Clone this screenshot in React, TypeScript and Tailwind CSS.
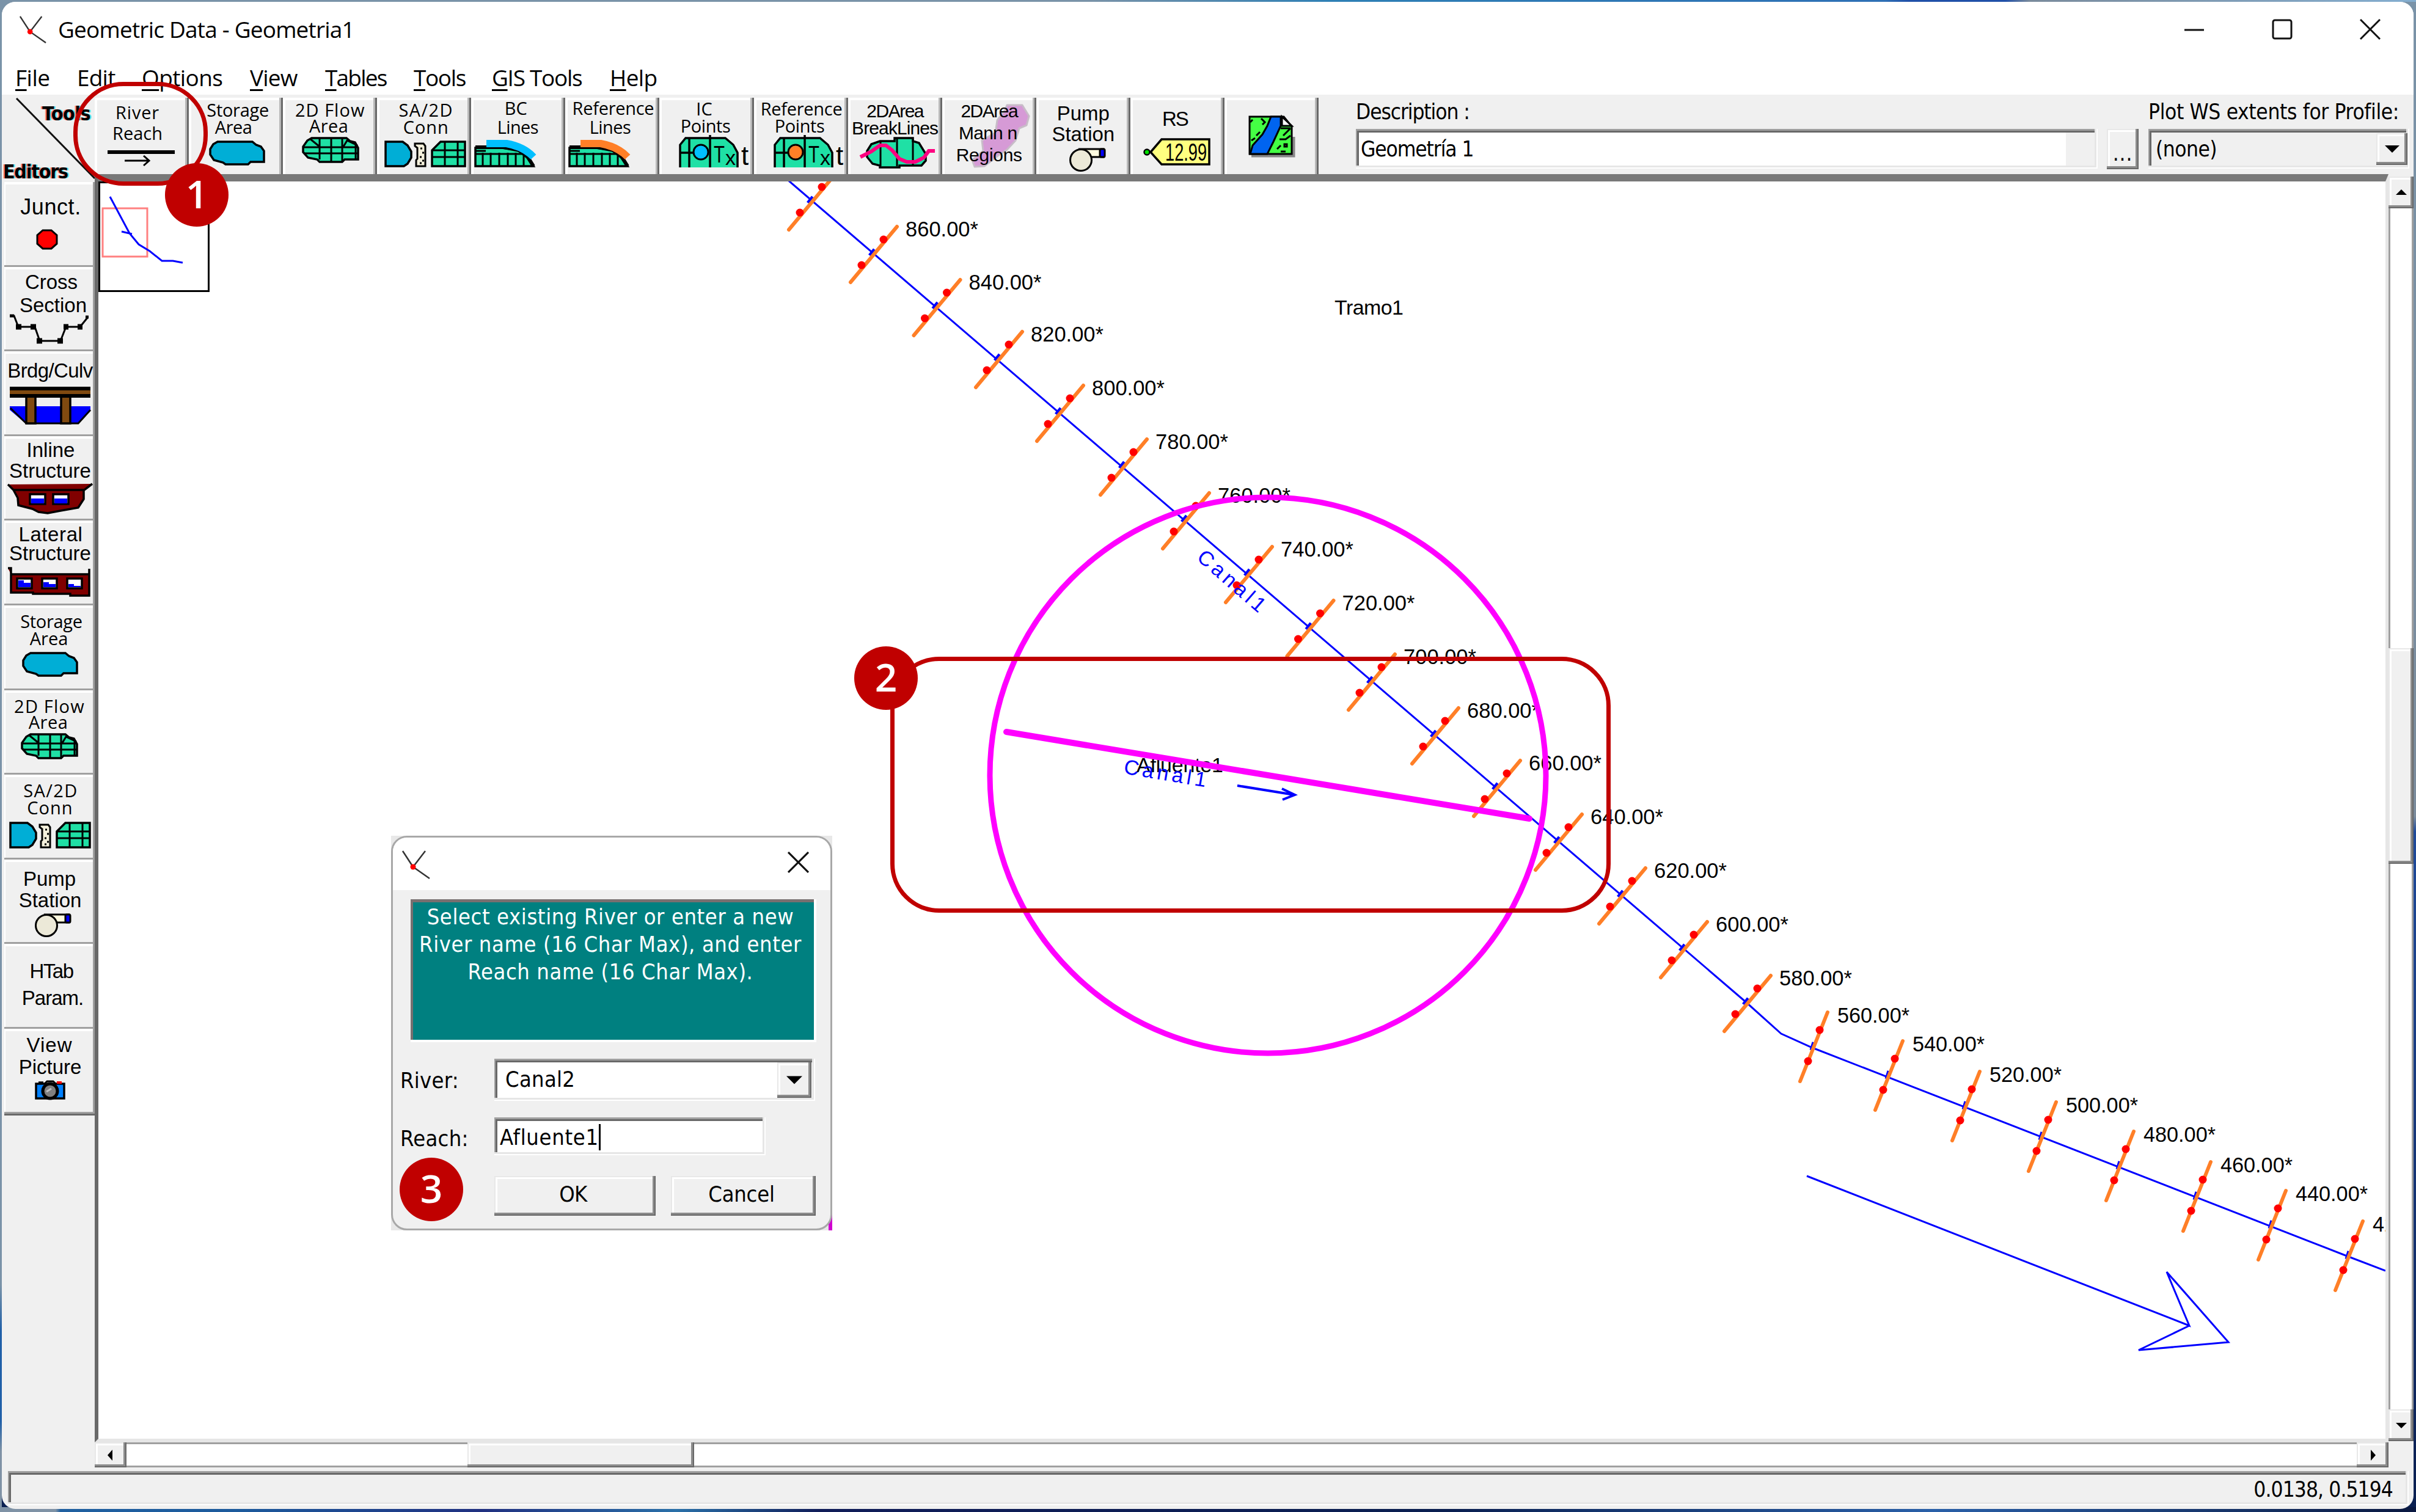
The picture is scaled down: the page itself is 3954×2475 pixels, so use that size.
import React from "react";

const SEGOE = "font-['Open_Sans','Noto_Sans',sans-serif]";
const TAHOMA = "font-['DejaVu_Sans_Condensed','DejaVu_Sans',sans-serif]";
const SANS = "font-['Liberation_Sans',Arial,sans-serif]";

const RAISED =
  "bg-[#f0f0f0] [box-shadow:inset_-2px_-2px_0_#696969,inset_-5px_-5px_0_#8c8c8c,inset_2px_2px_0_#e8e8e8,inset_5px_5px_0_#fff]";
const SUNKEN =
  "[box-shadow:inset_-2px_-2px_0_#fff,inset_-5px_-5px_0_#e6e6e6,inset_2px_3px_0_#a0a0a0,inset_5px_6px_0_#696969]";

/* ---------- pictograms ---------- */

const Art = ({ box, children }: { box: string; children: React.ReactNode }) => (
  <svg viewBox={box} className="absolute inset-0 h-full w-full" fill="none" stroke="#000" strokeWidth={3.5}>
    {children}
  </svg>
);

const Blob = () => <path d="M47 72H104L110 77L118 80L123 87V105H101L97 109H60L56 106L41 102L35 93V84L40 76Z" fill="#00aed6" />;

const MeshBlob = () => (
  <g>
    <path d="M47 66H104L110 71L118 73L123 82V101H101L97 105H60L56 101L41 98L33 89V80L40 70Z" fill="#1fe0a5" />
    <path d="M60 66V101M79 66V105M97 66V105M119 74V100M33 81H123M35 91H123M44 67L60 80M122 78L105 70L99 80" strokeWidth={3} />
  </g>
);

const Conn = ({ dy = 0 }: { dy?: number }) => (
  <g transform={`translate(0 ${dy})`}>
    <path d="M14 72H42L50 78L56 88V98L50 108L44 112H14Z" fill="#00aed6" />
    <path d="M62 75H76L79 79V112H64V102L66 100V82L62 79Z" fill="#f4f0dc" strokeWidth={3} />
    <path d="M71 83h3M74 90h3M70 97h3M74 103h3M70 107h3" strokeWidth={3} />
    <path d="M90 112V86L104 72H144V112Z" fill="#1fe0a5" />
    <path d="M111 72V112M132 72V112M90 86H144M90 97H144" strokeWidth={3} />
  </g>
);

const Curve = ({ color }: { color: string }) => (
  <g>
    <path d="M7 112V82H52L78 87L92 98L102 112Z" fill="#1fe0a5" />
    <path d="M7 81H52L76 84L92 96L102 112" strokeWidth={6} />
    <path d="M7 92H90M7 87H24M19 90V112M32 90V112M46 90V112M60 90V112M73 90V112M86 94V112" strokeWidth={3} />
    <path d="M25 75H58Q86 80 102 97" stroke={color} strokeWidth={12} />
  </g>
);

const PointArt = ({ color }: { color: string }) => (
  <g>
    <path d="M34 114V75L42 66H110L122 78L128 88V114Z" fill="#1fe0a5" stroke="none" />
    <path d="M34 114V77L43 66H108L121 77L128 90V114M49 66V114M83 61V114M34 90H60" />
    <circle cx={68} cy={89} r={12} fill={color} strokeWidth={3} />
    <g fill="#000" stroke="none" className={SANS} fontSize={38}>
      <text x={89} y={106} textLength={18} lengthAdjust="spacingAndGlyphs">T</text>
      <text x={108} y={110} fontSize={34}>x</text>
      <text x={134} y={110} fontSize={44}>t</text>
    </g>
  </g>
);

const Pump = ({ dx = 0, dy = 0 }: { dx?: number; dy?: number }) => (
  <g transform={`translate(${dx} ${dy})`} strokeWidth={3}>
    <path d="M72 84H110V97H84Z" fill="#fffbe0" />
    <rect x={104} y={84} width={8} height={13} rx={2} fill="#00f" />
    <circle cx={73} cy={102} r={17.5} fill="#ece9d8" />
  </g>
);

type Item = { lines: [string, string][]; pad: string; art: React.ReactNode };

const uiText = `${SEGOE} text-[29px]`;

const tools: Item[] = [
  {
    pad: "pt-[7px] pr-[14px]",
    lines: [["River", `${uiText} leading-[34px] tracking-[0.8px]`], ["Reach", `${uiText} leading-[34px]`]],
    art: (
      <g>
        <path d="M21 89H131" strokeWidth={6} />
        <path d="M49 103H88M80 95L89 103L80 111" strokeWidth={3} />
      </g>
    ),
  },
  {
    pad: "pt-[6px]",
    lines: [["Storage", `${uiText} leading-[28px] tracking-[-0.3px] pl-[6px]`], ["Area", `${uiText} leading-[28px] pr-[8px] tracking-[-0.5px]`]],
    art: <Blob />,
  },
  {
    pad: "pt-[7px]",
    lines: [["2D Flow", `${uiText} leading-[26px] tracking-[1px]`], ["Area", `${uiText} leading-[26px] pr-[4px] tracking-[0.5px]`]],
    art: <MeshBlob />,
  },
  {
    pad: "pt-[6px]",
    lines: [["SA/2D", `${uiText} leading-[28px] tracking-[1.4px] pl-[6px]`], ["Conn", `${uiText} leading-[28px] tracking-[1px] pl-[6px]`]],
    art: <Conn />,
  },
  {
    pad: "pt-[1px]",
    lines: [["BC", `${uiText} leading-[31px] pr-[8px]`], ["Lines", `${uiText} leading-[31px] tracking-[-0.6px] pr-[2px]`]],
    art: <Curve color="#00bfff" />,
  },
  {
    pad: "pt-[1px]",
    lines: [["Reference", `${uiText} leading-[31px] tracking-[-0.3px] pl-[2px]`], ["Lines", `${uiText} leading-[31px] tracking-[-0.6px] pr-[8px]`]],
    art: <Curve color="#ff7f27" />,
  },
  {
    pad: "pt-[4px]",
    lines: [["IC", `${uiText} leading-[28px] pr-[8px]`], ["Points", `${uiText} leading-[28px] tracking-[-0.4px] pr-[4px]`]],
    art: <PointArt color="#00bfff" />,
  },
  {
    pad: "pt-[4px]",
    lines: [["Reference", `${uiText} leading-[28px] tracking-[-0.3px] pl-[2px]`], ["Points", `${uiText} leading-[28px] tracking-[-0.4px] pr-[4px]`]],
    art: <PointArt color="#ff7f27" />,
  },
  {
    pad: "pt-[8px]",
    lines: [["2DArea", `${SANS} text-[30px] leading-[28px] tracking-[-1.5px]`], ["BreakLines", `${SANS} text-[30px] leading-[28px] tracking-[-0.9px]`]],
    art: (
      <g>
        <path d="M52 71H76V66H106V71L116 74L127 92V103L120 111H84V114H52V111L40 108L31 97V87L38 76Z" fill="#1fe0a5" />
        <path d="M53 71V112M80 66V112M106 68V111" strokeWidth={3} />
        <path d="M20 97L38 88L52 78H62L72 86L84 100L96 105H110L124 98L132 87H142" stroke="#ff0080" strokeWidth={6} />
      </g>
    ),
  },
  {
    pad: "pt-[4px]",
    lines: [
      ["2DArea", `${SANS} text-[30px] leading-[36px] tracking-[-1.5px]`],
      ["Mann n", `${SANS} text-[30px] leading-[36px] tracking-[-0.8px] pr-[4px]`],
      ["Regions", `${SANS} text-[30px] leading-[36px] tracking-[-0.3px]`],
    ],
    art: (
      <path
        d="M106 12L131 12L142 30L138 45L126 50L120 70L106 85L91 95L69 112L53 113L49 102L67 87L65 70L87 57L90 37L103 20Z"
        fill="#d69ad6"
        stroke="#c8bcc8"
        strokeWidth={3}
        strokeLinejoin="round"
      />
    ),
  },
  {
    pad: "pt-[9px]",
    lines: [["Pump", `${SANS} text-[33px] leading-[34px]`], ["Station", `${SANS} text-[33px] leading-[34px]`]],
    art: <Pump />,
  },
  {
    pad: "pt-[18px] pr-[8px]",
    lines: [["RS", `${SANS} text-[33px] leading-[34px] tracking-[-2px]`]],
    art: (
      <g>
        <path d="M33 89L51 68H129V109H51Z" fill="#ffff80" />
        <circle cx={27} cy={89} r={4.5} fill="#00e000" strokeWidth={2.5} />
        <text x={57} y={103} fill="#000" stroke="none" className={SANS} fontSize={40} textLength={68} lengthAdjust="spacingAndGlyphs">
          12.99
        </text>
      </g>
    ),
  },
  {
    pad: "",
    lines: [],
    art: (
      <g strokeWidth={3}>
        <path d="M44 95H113V64" stroke="#888" strokeWidth={5} />
        <path d="M41 31H97L110 47V92H41Z" fill="#44ff44" />
        <path d="M76 31L70 46L62 60L46 78L42 92H70L80 72L92 46V31Z" fill="#0064f0" />
        <path d="M94 31V46H110Z" fill="#fff" />
        <path d="M92 50H108M96 62L108 50M90 68L100 68L108 62M42 40L46 36M60 34L66 40L62 44M52 62L58 56M44 70L50 66M86 84L92 78M92 88H100M98 76H102V80H98Z" />
      </g>
    ),
  },
];

const side = `${SANS} text-[33px]`;
const sideUi = `${SEGOE} text-[29px]`;

const editors: Item[] = [
  {
    pad: "pt-[24px]",
    lines: [["Junct.", `${SANS} text-[36px] leading-[34px] tracking-[0.6px] pl-[4px]`]],
    art: <path d="M63 79H77L86 87V101L77 109H63L54 101V87Z" fill="#f00" strokeWidth={3} />,
  },
  {
    pad: "pt-[6px]",
    lines: [["Cross", `${side} leading-[38px] pl-[6px]`], ["Section", `${side} leading-[38px] pl-[12px]`]],
    art: (
      <g>
        <path d="M9 80H16L23 98H50L58 121H92L101 98H124L137 82" strokeWidth={3} />
        <path d="M19 98h9M43 98h9M53 121h9M87 121h9M97 98h8M120 98h8" strokeWidth={9} />
        <path d="M9 80h7M133 82h5" strokeWidth={5} />
      </g>
    ),
  },
  {
    pad: "pt-[15px]",
    lines: [["Brdg/Culv", `${side} leading-[34px] tracking-[-0.6px] pl-[2px]`]],
    art: (
      <g>
        <path d="M9 90H141V96L121 119H36L9 96Z" fill="#00f" stroke="none" />
        <path d="M10 93L36 118H121L141 96" strokeWidth={3} />
        <rect x={9} y={74} width={132} height={16} fill="#f0f0f0" stroke="none" />
        <rect x={36} y={72} width={15} height={46} fill="#804a10" />
        <rect x={93} y={72} width={15} height={46} fill="#804a10" />
        <rect x={9} y={58} width={132} height={18} fill="#000" stroke="none" />
        <rect x={9} y={64} width={132} height={6} fill="#804a10" stroke="none" />
      </g>
    ),
  },
  {
    pad: "pt-[6px]",
    lines: [["Inline", `${side} leading-[34px] pl-[4px]`], ["Structure", `${side} leading-[34px] pl-[2px]`]],
    art: (
      <g>
        <path d="M6 79L15 88H131L144 78M15 88L22 101L23 113L46 119L56 124L71 126L92 122L121 117L130 103V88" fill="#800000" />
        <rect x={42} y={95} width={25} height={16} fill="#fff" />
        <rect x={80} y={95} width={25} height={16} fill="#fff" />
        <path d="M44 106H65M82 106H103" stroke="#00f" strokeWidth={8} />
      </g>
    ),
  },
  {
    pad: "pt-[7px]",
    lines: [["Lateral", `${side} leading-[31px] tracking-[0.6px] pl-[4px]`], ["Structure", `${side} leading-[31px] pl-[2px]`]],
    art: (
      <g>
        <path d="M6 78H11V88H139V79V123H108V120H47V118H11V88" fill="#800000" />
        <rect x={21} y={95} width={24} height={16} fill="#fff" />
        <rect x={62} y={95} width={24} height={16} fill="#fff" />
        <rect x={103} y={95} width={24} height={16} fill="#fff" />
        <path d="M23 98H32V102H43V109H23ZM64 101H73V104H84V109H64ZM105 104H114V107H125V109H105Z" fill="#00f" stroke="none" />
      </g>
    ),
  },
  {
    pad: "pt-[12px]",
    lines: [["Storage", `${sideUi} leading-[28px] tracking-[-0.3px] pl-[6px]`], ["Area", `${sideUi} leading-[28px] pr-[2px]`]],
    art: (
      <g transform="translate(-4 6)">
        <Blob />
      </g>
    ),
  },
  {
    pad: "pt-[13px]",
    lines: [["2D Flow", `${sideUi} leading-[26px] tracking-[1.2px]`], ["Area", `${sideUi} leading-[26px] tracking-[0.5px] pr-[4px]`]],
    art: (
      <g transform="translate(-4 6)">
        <MeshBlob />
      </g>
    ),
  },
  {
    pad: "pt-[12px]",
    lines: [["SA/2D", `${sideUi} leading-[28px] tracking-[1.4px] pl-[4px]`], ["Conn", `${sideUi} leading-[28px] tracking-[1px] pl-[2px]`]],
    art: (
      <g transform="translate(-4 0)">
        <Conn dy={7} />
      </g>
    ),
  },
  {
    pad: "pt-[14px]",
    lines: [["Pump", `${side} leading-[35px]`], ["Station", `${side} leading-[35px] pl-[2px]`]],
    art: <Pump dx={-4} dy={6} />,
  },
  {
    pad: "pt-[23px]",
    lines: [["HTab", `${side} leading-[44px] tracking-[-1.5px] pl-[6px]`], ["Param.", `${side} leading-[44px] tracking-[-1px] pl-[10px]`]],
    art: null,
  },
  {
    pad: "pt-[9px]",
    lines: [["View", `${side} leading-[36px] tracking-[1px]`], ["Picture", `${side} leading-[36px] pl-[2px]`]],
    art: (
      <g>
        <path d="M52 90H98V114H52ZM56 88H64" fill="#0080ff" />
        <path d="M86 88H94" stroke="#f00" strokeWidth={4} />
        <path d="M66 90L70 86H80L84 90" fill="#ddd" strokeWidth={3} />
        <circle cx={75} cy={102} r={12} fill="#808080" strokeWidth={5} />
        <path d="M69 103L77 98" stroke="#c0c0c0" strokeWidth={3} />
      </g>
    ),
  },
];

const Face = ({ item, box, className }: { item: Item; box: string; className: string }) => (
  <button className={`relative flex flex-col text-center text-black ${className}`}>
    <Art box={box}>{item.art}</Art>
    <span className={`relative block w-full ${item.pad}`}>
      {item.lines.map(([t, c]) => (
        <span key={t} className={`block whitespace-nowrap ${c}`}>
          {t}
        </span>
      ))}
    </span>
  </button>
);

/* ---------- schematic ---------- */

const steep: [string, number, number][] = [
  ["", 1367, 285],
  ["860.00*", 1468, 371],
  ["840.00*", 1571.5, 458],
  ["820.00*", 1673, 543],
  ["800.00*", 1773, 631],
  ["780.00*", 1877, 719],
  ["760.00*", 1979, 807],
  ["740.00*", 2082, 895],
  ["720.00*", 2182.5, 983],
  ["700.00*", 2283, 1071],
  ["680.00*", 2387, 1159],
  ["660.00*", 2488, 1245],
  ["640.00*", 2589, 1333],
  ["620.00*", 2693, 1421],
  ["600.00*", 2794, 1509],
  ["580.00*", 2898, 1597],
];

const gentle: [string, number, number][] = [
  ["560.00*", 2991, 1657],
  ["540.00*", 3114, 1704],
  ["520.00*", 3240, 1754],
  ["500.00*", 3365, 1804],
  ["480.00*", 3492, 1852],
  ["460.00*", 3618, 1902],
  ["440.00*", 3741, 1949],
  ["420.00*", 3867, 1999],
];

const Schematic = () => (
  <svg viewBox="161 297 3743 2058" className="block h-[2058px] w-[3743px]" fill="none">
    <path d="M1291 296L2857 1640L2915 1692L2966 1715L3841 2056L3904 2080" stroke="#00f" strokeWidth={3} />
    {steep.map(([label, x, y]) => (
      <g key={y} transform={`translate(${x} ${y})`}>
        <path d="M-37 37L-45 47" stroke="#00f" strokeWidth={5} />
        <path d="M0 0L-76 91" stroke="#ff7f27" strokeWidth={6} strokeLinecap="round" />
        <circle cx={-22} cy={21} r={6.5} fill="#f00" />
        <circle cx={-58} cy={63} r={6.5} fill="#f00" />
        {label && (
          <text x={14} y={16} className={SANS} fontSize={34.5} fill="#000" textLength={119} lengthAdjust="spacingAndGlyphs">
            {label}
          </text>
        )}
      </g>
    ))}
    {gentle.map(([label, x, y]) => (
      <g key={y} transform={`translate(${x} ${y})`}>
        <path d="M-23 49L-27 62" stroke="#00f" strokeWidth={5} />
        <path d="M0 0L-45 113" stroke="#ff7f27" strokeWidth={6} strokeLinecap="round" />
        <circle cx={-13} cy={29} r={6.5} fill="#f00" />
        <circle cx={-32} cy={80} r={6.5} fill="#f00" />
        <text x={16} y={17} className={SANS} fontSize={34.5} fill="#000" textLength={118} lengthAdjust="spacingAndGlyphs">
          {label}
        </text>
      </g>
    ))}
    <text x={2184} y={515} className={SANS} fontSize={34} fill="#000" textLength={113}>
      Tramo1
    </text>
    <text transform="translate(1957 915) rotate(41)" className={SANS} fontSize={34} fill="#00f" textLength={136}>
      Canal1
    </text>
    <text x={1860} y={1264} className={SANS} fontSize={34} fill="#000" textLength={142}>
      Afluente1
    </text>
    <text transform="translate(1838 1266) rotate(9.5)" className={SANS} fontSize={34} fill="#00f" textLength={136}>
      Canal1
    </text>
    <path d="M2025 1286L2118 1301M2098 1291L2119 1301L2099 1309" stroke="#00f" strokeWidth={4} />
    <path d="M2957 1925L3583 2170L3546 2082L3647 2197L3500 2210L3583 2170" stroke="#00f" strokeWidth={3} />
    <circle cx={2075} cy={1269} r={455} stroke="#f0f" strokeWidth={9} />
    <path d="M1647 1198L2503 1340" stroke="#f0f" strokeWidth={10} strokeLinecap="round" />
    <rect x={162.5} y={298.5} width={179} height={178} fill="#fff" stroke="#000" strokeWidth={3} />
    <rect x={168} y={341} width={73} height={79} stroke="#ff8080" strokeWidth={3} />
    <path d="M180 322L212 382L227 400L245 411L265 427H283L299 430M199 379L216 383" stroke="#00f" strokeWidth={3} />
  </svg>
);

/* ---------- small parts ---------- */

const Tri = ({ d, className }: { d: string; className: string }) => (
  <svg viewBox="0 0 20 20" className={className} fill="#000">
    <path d={d} />
  </svg>
);

const ScrollArrow = ({ d, className }: { d: string; className: string }) => (
  <div className={`flex shrink-0 items-center justify-center ${RAISED} ${className}`}>
    <Tri d={d} className="h-5 w-5" />
  </div>
);

const Badge = ({ n, className }: { n: string; className: string }) => (
  <div className={`absolute flex h-[104px] w-[104px] items-center justify-center rounded-full bg-[#c00000] pb-1 text-[64px] font-semibold leading-none text-white ${SEGOE} ${className}`}>
    {n}
  </div>
);

const RiverMark = ({ className }: { className: string }) => (
  <svg viewBox="0 0 48 48" className={className} fill="none" stroke="#333" strokeWidth={2.5}>
    <path d="M3 1L20 27L40 1M20 27L47 46" />
    <circle cx={20} cy={27} r={4.5} fill="#f00" stroke="none" />
  </svg>
);

const menus: [string, string, string][] = [
  ["F", "ile", "w-[101px] tracking-[-0.5px]"],
  ["", "Edit", "w-[106px] tracking-[-0.8px]"],
  ["O", "ptions", "w-[177px] tracking-[-0.6px]"],
  ["V", "iew", "w-[123px] tracking-[-0.8px]"],
  ["T", "ables", "w-[145px] tracking-[-1.8px]"],
  ["T", "ools", "w-[128px] tracking-[-1.4px]"],
  ["G", "IS Tools", "w-[193px] tracking-[-1.3px]"],
  ["H", "elp", "w-[100px] tracking-[-0.6px]"],
];

const Dialog = () => (
  <div className="absolute left-[640px] top-[1368px] h-[646px] w-[722px] bg-[#e8e8e8]">
    <div className="absolute right-0 top-[488px] h-[42px] w-[3px] bg-[#c800c8]" />
    <div className="absolute bottom-0 right-0 h-[36px] w-[6px] bg-[#d000d0]" />
    <div className={`relative flex h-full w-full flex-col overflow-hidden rounded-[26px] border-[3px] border-[#a8a8a8] bg-[#f0f0f0] text-[36px] tracking-[0.3px] text-black ${TAHOMA}`}>
      <div className="flex h-[86px] shrink-0 items-start justify-between bg-white pl-[12px] pr-[35px] pt-[21px]">
        <RiverMark className="h-[48px] w-[50px]" />
        <svg viewBox="0 0 34 34" className="mt-[2px] h-[35px] w-[35px]" stroke="#111" strokeWidth={3} fill="none">
          <path d="M1 1L33 33M33 1L1 33" />
        </svg>
      </div>
      <div className="ml-[29px] mt-[15px] h-[234px] w-[664px] shrink-0 bg-[#008080] pt-[6px] text-center leading-[45px] tracking-[0.6px] text-white [box-shadow:inset_-4px_-4px_0_#fff,inset_4px_5px_0_#787070]">
        <span className="block whitespace-nowrap pr-[10px]">Select existing River or enter a new</span>
        <span className="block whitespace-nowrap pr-[10px]">River name (16 Char Max), and enter</span>
        <span className="block whitespace-nowrap pr-[10px]">Reach name (16 Char Max).</span>
      </div>
      <div className="mt-[27px] flex h-[69px] shrink-0 items-center pl-[12px]">
        <span className="w-[154px] pt-[2px]">River:</span>
        <div className={`flex h-[69px] w-[525px] items-center justify-between bg-white py-[6px] pl-[18px] pr-[6px] ${SUNKEN}`}>
          <span className="pb-[2px]">Canal2</span>
          <div className={`flex h-[58px] w-[56px] items-center justify-center ${RAISED}`}>
            <Tri d="M0 5H20L10 15Z" className="h-[26px] w-[26px]" />
          </div>
        </div>
      </div>
      <div className="mt-[27px] flex h-[62px] shrink-0 items-center pl-[12px]">
        <span className="w-[154px] pt-[8px]">Reach:</span>
        <div className={`flex h-[62px] w-[444px] items-center bg-white pl-[9px] pt-[3px] ${SUNKEN}`}>
          <span className="tracking-[0.7px]">Afluente1</span>
          <div className="h-[43px] w-[3px] bg-black" />
        </div>
      </div>
      <div className="mt-[34px] flex h-[65px] shrink-0 gap-[25px] pl-[166px]">
        <button className={`w-[264px] pb-[6px] pr-[6px] text-center tracking-[-0.5px] ${RAISED}`}>OK</button>
        <button className={`w-[237px] pb-[6px] pr-[6px] text-center tracking-[-0.2px] ${RAISED}`}>Cancel</button>
      </div>
    </div>
    <Badge n="3" className="left-[14px] top-[527px]" />
  </div>
);

export default function App() {
  return (
    <div className="relative h-[2475px] w-[3954px] overflow-hidden bg-[linear-gradient(180deg,#7a93a8_0%,#7a8b9c_54%,#1f4a9a_55%,#0a1f50_100%)] pb-[5px] pl-[3px] pr-[4px] pt-[3px]">
      <div className="absolute left-0 top-0 h-[3px] w-full bg-[linear-gradient(90deg,#7a93a8_0%,#7a93a8_45%,#2f80b5_55%,#2f70b5_78%,#2050a8_79%,#2050a8_83%,#7a8b9c_84%,#84aed0_100%)]" />
      <div className="absolute bottom-0 left-0 h-[8px] w-full bg-[linear-gradient(90deg,#7f92a5_0%,#7f92a5_2.3%,#2060a0_2.5%,#1c5a9c_10%,#203080_20%,#2a70a8_28%,#101c58_34%,#0a1f50_60%,#2a60a8_80%,#0a1840_100%)]" />
      <div className="absolute left-0 top-0 h-full w-[3px] bg-[linear-gradient(180deg,#7a93a8_0%,#7a93a8_85%,#2060a8_88%,#2060a8_94%,#7f92a5_96%)]" />

      <div className="relative flex h-full w-full flex-col overflow-hidden rounded-[22px] bg-[#f0f0f0]">
        {/* title bar */}
        <div className="flex h-[90px] shrink-0 items-center bg-white pl-[26px]">
          <RiverMark className="mt-[2px] h-[46px] w-[48px]" />
          <h1 className={`ml-[18px] whitespace-nowrap text-[37px] tracking-[-0.8px] text-black ${SEGOE}`}>Geometric Data - Geometria1</h1>
          <div className="ml-auto flex items-center gap-[110px] pr-[54px]">
            <svg viewBox="0 0 34 34" className="h-[34px] w-[34px]" stroke="#111" strokeWidth={3} fill="none">
              <path d="M1 18H33" />
            </svg>
            <svg viewBox="0 0 34 34" className="h-[34px] w-[34px]" stroke="#111" strokeWidth={3} fill="none">
              <rect x={2} y={2} width={30} height={30} rx={3} />
            </svg>
            <svg viewBox="0 0 34 34" className="h-[34px] w-[34px]" stroke="#111" strokeWidth={3} fill="none">
              <path d="M1 1L33 33M33 1L1 33" />
            </svg>
          </div>
        </div>
        {/* menu bar */}
        <div className={`flex h-[62px] shrink-0 items-center bg-white pl-[22px] pt-[6px] text-[37px] text-black ${SEGOE}`}>
          {menus.map(([k, rest, c]) => (
            <span key={k + rest} className={`whitespace-nowrap ${c}`}>
              <span className="underline decoration-[3px] underline-offset-[5px]">{k}</span>
              {rest}
            </span>
          ))}
        </div>

        <div className="flex h-[2247px] shrink-0">
          {/* editors column */}
          <div className="flex w-[152px] shrink-0 flex-col">
            <div className={`relative flex h-[143px] shrink-0 flex-col text-[32px] font-bold leading-none text-black [text-shadow:-2px_0_0_#ff8080,2px_0_0_#60e8e8] ${TAHOMA}`}>
              <svg viewBox="0 0 152 143" className="absolute inset-0 h-full w-full" stroke="#111" strokeWidth={3}>
                <path d="M24 6L152 137" />
              </svg>
              <span className="relative ml-[66px] mt-[15px] whitespace-nowrap tracking-[-0.6px]">Tools</span>
              <span className="relative ml-[2px] mt-auto whitespace-nowrap pb-[1px] tracking-[-1.3px]">Editors</span>
            </div>
            <div className="flex w-[152px] flex-col pl-[4px]">
              {editors.map((e, i) => (
                <Face
                  key={i}
                  item={e}
                  box="0 0 148 138.6"
                  className="h-[138.6px] w-[148px] shrink-0 bg-[#f0f0f0] [box-shadow:inset_0_-3px_0_#a0a0a0,inset_2px_0_0_#fff,inset_-3px_0_0_#a0a0a0,inset_0_4px_0_#fff]"
                />
              ))}
              <div className="h-[3px] bg-[#696969]" />
            </div>
          </div>

          <div className="flex w-[3795px] shrink-0 flex-col">
            {/* toolbar */}
            <div className="flex h-[130px] shrink-0">
              <div className="mt-[5px] flex w-[2003px] shrink-0">
                {tools.map((t, i) => (
                  <Face
                    key={i}
                    item={t}
                    box="0 0 154 125"
                    className="h-[125px] w-[154.08px] shrink-0 bg-[#f0f0f0] [box-shadow:inset_-3px_0_0_#696969,inset_-6px_0_0_#b8b8b8,inset_4px_4px_0_#fff]"
                  />
                ))}
              </div>
              <div className={`ml-[61px] flex text-[35px] leading-[40px] text-black ${TAHOMA}`}>
                <div className="w-[1214px] pt-[8px]">
                  <span className="block whitespace-nowrap tracking-[-1.1px]">Description :</span>
                  <div className={`mt-[8px] flex h-[65px] items-center bg-[linear-gradient(90deg,#fff_1162px,#f0f0f0_1162px)] pl-[8px] tracking-[-1.1px] ${SUNKEN}`}>Geometría 1</div>
                </div>
                <button className={`ml-[15px] mt-[56px] flex h-[66px] w-[52px] items-end justify-center pb-[6px] tracking-[0.8px] ${RAISED}`}>...</button>
                <div className="ml-[16px] w-[427px] pt-[8px]">
                  <span className="block whitespace-nowrap tracking-[-0.35px]">Plot WS extents for Profile:</span>
                  <div className={`mt-[8px] flex h-[65px] items-center justify-between pl-[12px] pr-[3px] tracking-[-0.5px] ${SUNKEN}`}>
                    <span>(none)</span>
                    <div className={`flex h-[52px] w-[51px] items-center justify-center ${RAISED}`}>
                      <Tri d="M0 5H20L10 15Z" className="h-[24px] w-[24px]" />
                    </div>
                  </div>
                </div>
              </div>
            </div>

            <div className="flex h-[2117px]">
              <div className="flex w-[3754px] shrink-0 flex-col">
                <div className="h-[2076px] bg-white [border-bottom:6px_solid_#e6e6e6] [border-left:6px_solid_#696969] [border-right:5px_solid_#e6e6e6] [border-top:12px_solid_#787878]">
                  <Schematic />
                </div>
                <div className="flex h-[41px] border-y-[3px] border-[#a0a0a0] bg-white">
                  <ScrollArrow d="M13 1V19L5 10Z" className="-my-[3px] w-[52px]" />
                  <div className="w-[558px]" />
                  <div className={`-my-[3px] w-[371px] ${RAISED}`} />
                  <ScrollArrow d="M7 1V19L15 10Z" className="-my-[3px] ml-auto w-[52px]" />
                </div>
              </div>
              <div className="mt-[4px] flex w-[41px] flex-col border-x-[3px] border-[#a0a0a0] bg-white">
                <ScrollArrow d="M1 14H19L10 5Z" className="-mx-[3px] h-[52px]" />
                <div className="h-[720px]" />
                <div className={`-mx-[3px] h-[353px] ${RAISED}`} />
                <ScrollArrow d="M1 6H19L10 15Z" className="-mx-[3px] mt-auto h-[52px]" />
                <div className="-mx-[3px] h-[43px] bg-[#f0f0f0]" />
              </div>
            </div>
          </div>
        </div>

        {/* status bar */}
        <div className={`ml-[10px] mt-[6px] flex h-[56px] w-[3929px] shrink-0 items-center justify-end pr-[26px] pt-[4px] text-[35px] tracking-[-0.9px] text-black ${TAHOMA} ${SUNKEN}`}>
          0.0138, 0.5194
        </div>
      </div>

      {/* annotations */}
      <div className="absolute left-[120px] top-[134px] h-[170px] w-[220px] rounded-[82px] border-[7px] border-[#c00000]" />
      <Badge n="1" className="left-[270px] top-[267px]" />
      <div className="absolute left-[1457px] top-[1075px] h-[419px] w-[1179px] rounded-[80px] border-[7px] border-[#c00000]" />
      <Badge n="2" className="left-[1398px] top-[1058px]" />
      <Dialog />
    </div>
  );
}
